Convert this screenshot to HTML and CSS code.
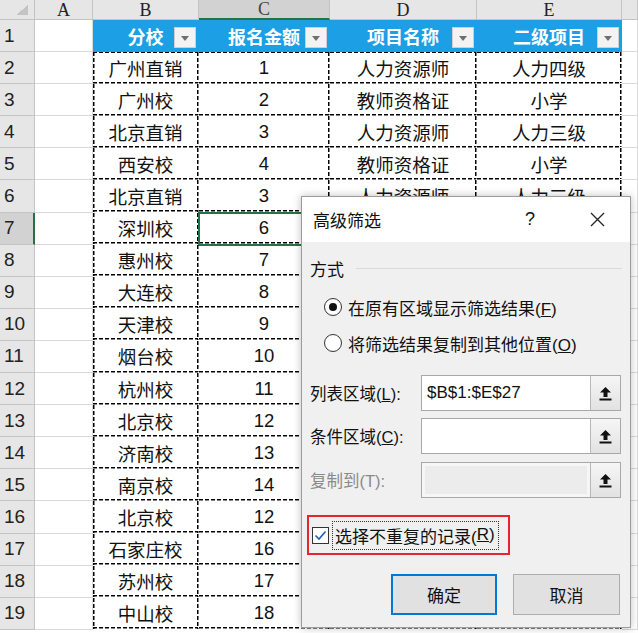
FILE: index.html
```html
<!DOCTYPE html>
<html lang="zh-CN">
<head>
    <meta charset="UTF-8">
    <title>高级筛选</title>
    <link rel="stylesheet" href="styles.css">
</head>
<body>
<div class="sheet" id="sheet"></div>

<div class="dlg">
    <div class="dlg-title">
        <span class="dlg-name">高级筛选</span>
        <span class="help">?</span>
        <svg class="close" width="15" height="15" viewBox="0 0 15 15">
            <path d="M1 1 L14 14 M14 1 L1 14" stroke="#222" stroke-width="1.3" fill="none"/>
        </svg>
    </div>
    <div class="dlg-body">
        <div class="group">
            <span>方式</span>
            <span class="group-line"></span>
        </div>
        <label class="radio-row first">
            <span class="radio on"></span>
            <span>在原有区域显示筛选结果(<u>F</u>)</span>
        </label>
        <label class="radio-row">
            <span class="radio"></span>
            <span>将筛选结果复制到其他位置(<u>O</u>)</span>
        </label>

        <div class="range first">
            <span class="range-label">列表区域(<u>L</u>):</span>
            <div class="field">
                <span class="val">$B$1:$E$27</span>
                <span class="pick"><svg width="13" height="15" viewBox="0 0 13 15"><path d="M6.5 1 L12 6.5 H8.5 V11 H4.5 V6.5 H1 Z" fill="#111"/><rect x="0.5" y="12.5" width="12" height="2" fill="#111"/></svg></span>
            </div>
        </div>
        <div class="range">
            <span class="range-label">条件区域(<u>C</u>):</span>
            <div class="field">
                <span class="val"></span>
                <span class="pick"><svg width="13" height="15" viewBox="0 0 13 15"><path d="M6.5 1 L12 6.5 H8.5 V11 H4.5 V6.5 H1 Z" fill="#111"/><rect x="0.5" y="12.5" width="12" height="2" fill="#111"/></svg></span>
            </div>
        </div>
        <div class="range third">
            <span class="range-label off">复制到(T):</span>
            <div class="field off">
                <span class="val"></span>
                <span class="pick"><svg width="13" height="15" viewBox="0 0 13 15"><path d="M6.5 1 L12 6.5 H8.5 V11 H4.5 V6.5 H1 Z" fill="#111"/><rect x="0.5" y="12.5" width="12" height="2" fill="#111"/></svg></span>
            </div>
        </div>

        <div class="mark">
            <span class="check">
                <svg width="17" height="17" viewBox="0 0 17 17">
                    <rect x="0.5" y="0.5" width="16" height="16" fill="#fff" stroke="#333"/>
                    <path d="M3.5 8.5 L7 12 L13.5 4.5" stroke="#1f5fb8" stroke-width="1.6" fill="none"/>
                </svg>
            </span>
            <span class="focus">选择不重复的记录(<u>R</u>)</span>
        </div>

        <div class="buttons">
            <button class="btn ok">确定</button>
            <button class="btn">取消</button>
        </div>
    </div>
</div>

<script>
    // F 列只露出一小截，不显示列标
    const cols = ['A', 'B', 'C', 'D', 'E', ''];
    const heads = ['分校', '报名金额', '项目名称', '二级项目'];
    // 第2行到第19行
    const rows = [
        ['广州直销', '1', '人力资源师', '人力四级'],
        ['广州校', '2', '教师资格证', '小学'],
        ['北京直销', '3', '人力资源师', '人力三级'],
        ['西安校', '4', '教师资格证', '小学'],
        ['北京直销', '3', '人力资源师', '人力三级'],
        ['深圳校', '6', '', ''],
        ['惠州校', '7', '', ''],
        ['大连校', '8', '', ''],
        ['天津校', '9', '', ''],
        ['烟台校', '10', '', ''],
        ['杭州校', '11', '', ''],
        ['北京校', '12', '', ''],
        ['济南校', '13', '', ''],
        ['南京校', '14', '', ''],
        ['北京校', '12', '', ''],
        ['石家庄校', '16', '', ''],
        ['苏州校', '17', '', ''],
        ['中山校', '18', '', '']
    ];

    let html = '<div class="corner"><i></i></div>';
    cols.forEach(c => {
        html += `<div class="ch${c === 'C' ? ' sel' : ''}">${c}</div>`;
    });

    for (let r = 1; r <= 19; r++) {
        html += `<div class="rh${r === 7 ? ' sel' : ''}">${r}</div><div class="cell"></div>`;
        if (r === 1) {
            heads.forEach(h => {
                html += `<div class="cell th">${h}<span class="fb"></span></div>`;
            });
        } else {
            rows[r - 2].forEach((v, i) => {
                let cls = 'cell t';
                if (i === 0) cls += ' l';
                if (r === 2) cls += ' tp';
                if (r === 7 && i === 1) cls += ' act';
                html += `<div class="${cls}">${v}</div>`;
            });
        }
        html += '<div class="cell"></div>';
    }

    document.getElementById('sheet').innerHTML = html;
</script>
</body>
</html>
```

FILE: styles.css
```css
body {
    margin: 0;
    background-color: #fff;
    font-family: "Liberation Sans", "Noto Sans CJK SC", sans-serif;
    color: #111;
    overflow: hidden;
}

/* 表格区域 */
.sheet {
    display: grid;
    grid-template-columns: 35px 58px 106px 131px 147px 145px 1fr;
    grid-template-rows: 20px repeat(19, 32.1px);
}

.sheet > div {
    box-sizing: border-box;
    display: flex;
    align-items: center;
    justify-content: center;
    border-right: 1px solid #d9d9d9;
    border-bottom: 1px solid #d9d9d9;
}

.corner {
    background-color: #e6e6e6;
    justify-content: flex-end !important;
    align-items: flex-start !important;
    padding: 5px 6px 0 0;
    border-color: #c2c2c2 !important;
}

.corner i {
    width: 12px;
    height: 10px;
    background: linear-gradient(to bottom right, transparent 50%, #c4c4c4 50%);
}

.ch {
    background-color: #e6e6e6;
    border-color: #c4c4c4 !important;
    font-family: "Liberation Serif", serif;
    font-size: 18px;
    color: #222;
    padding-top: 1px;
}

.ch.sel {
    background-color: #d2d2d2;
    border-bottom: 2px solid #217346 !important;
    color: #444;
}

.rh {
    background-color: #e6e6e6;
    border-color: #c4c4c4 !important;
    justify-content: flex-start !important;
    padding-left: 4px;
    font-size: 19px;
    color: #222;
}

.rh.sel {
    background-color: #d2d2d2;
    border-right: 2px solid #217346 !important;
}

.cell {
    font-size: 18.5px;
}

/* 表头 */
.th {
    position: relative;
    background-color: #1c9fe4;
    border-color: #1c9fe4 !important;
    color: #fff;
    font-weight: bold;
    font-size: 18px;
}

.fb {
    position: absolute;
    right: 2px;
    top: 7px;
    width: 22px;
    height: 21px;
    box-sizing: border-box;
    background-color: #f3f3f3;
    border: 1px solid #cfcfcf;
}

.fb::after {
    content: "";
    position: absolute;
    left: 6px;
    top: 8px;
    border-left: 4.5px solid transparent;
    border-right: 4.5px solid transparent;
    border-top: 5px solid #6f6f6f;
}

/* 复制区域的虚线框 */
.t {
    --dh: repeating-linear-gradient(90deg, #000 0 4px, transparent 4px 6px);
    --dv: repeating-linear-gradient(180deg, #000 0 4px, transparent 4px 6px);
    border-color: transparent !important;
    background-origin: border-box;
    background: var(--dh) left bottom / 100% 1.5px no-repeat,
                var(--dv) right top / 1.5px 100% no-repeat;
}

.t.l {
    background: var(--dh) left bottom / 100% 1.5px no-repeat,
                var(--dv) right top / 1.5px 100% no-repeat,
                var(--dv) left top / 1.5px 100% no-repeat;
}

.t.tp {
    background: var(--dh) left bottom / 100% 1.5px no-repeat,
                var(--dv) right top / 1.5px 100% no-repeat,
                var(--dh) left top / 100% 1.5px no-repeat;
}

.t.l.tp {
    background: var(--dh) left bottom / 100% 1.5px no-repeat,
                var(--dv) right top / 1.5px 100% no-repeat,
                var(--dv) left top / 1.5px 100% no-repeat,
                var(--dh) left top / 100% 1.5px no-repeat;
}

.act {
    outline: 2px solid #217346;
    outline-offset: -1px;
}

/* 高级筛选对话框 */
.dlg {
    position: absolute;
    left: 301px;
    top: 196px;
    width: 330px;
    height: 432px;
    box-sizing: border-box;
    border: 1px solid #9c9c9c;
    background-color: #f0f0f0;
    box-shadow: 0 0 8px rgba(0, 0, 0, 0.25);
    font-size: 17px;
    color: #111;
}

.dlg-title {
    height: 45px;
    background-color: #fff;
    display: flex;
    align-items: center;
    padding: 0 25px 0 11px;
}

.dlg-name {
    flex: 1;
}

.help {
    font-size: 18px;
    margin-right: 55px;
}

.dlg-body {
    padding: 0 8px;
}

.group {
    margin-top: 16px;
    height: 20px;
    display: flex;
    align-items: center;
}

.group-line {
    flex: 1;
    height: 1px;
    margin-left: 12px;
    background-color: #dadada;
}

.radio-row {
    display: flex;
    align-items: center;
    height: 22px;
    margin-top: 14px;
    margin-left: 14px;
}

.radio-row.first {
    margin-top: 18px;
}

.radio {
    width: 18px;
    height: 18px;
    box-sizing: border-box;
    border: 1px solid #333;
    border-radius: 50%;
    background-color: #fff;
    margin-right: 6px;
    display: flex;
    align-items: center;
    justify-content: center;
}

.radio.on::after {
    content: "";
    width: 8px;
    height: 8px;
    border-radius: 50%;
    background-color: #111;
}

.range {
    display: flex;
    align-items: center;
    margin-top: 7px;
}

.range.first {
    margin-top: 21px;
}

.range.third {
    margin-top: 8px;
}

.range-label {
    width: 111px;
    font-size: 16.5px;
}

.range-label.off {
    color: #8a8a8a;
}

.field {
    width: 200px;
    height: 36px;
    box-sizing: border-box;
    border: 1px solid #a8a8a8;
    display: flex;
}

.val {
    flex: 1;
    background-color: #fff;
    padding-left: 5px;
    display: flex;
    align-items: center;
    font-size: 17px;
}

.field.off .val {
    background-color: #ececec;
    border: 3px solid #f6f6f6;
}

.pick {
    width: 29px;
    border-left: 1px solid #b8b8b8;
    background: linear-gradient(#f6f6f6, #e2e2e2);
    display: flex;
    align-items: center;
    justify-content: center;
}

.mark {
    margin-top: 17px;
    margin-left: -3px;
    width: 203px;
    height: 40px;
    box-sizing: border-box;
    border: 2px solid #e0262f;
    display: flex;
    align-items: center;
}

.check {
    margin-left: 3px;
    width: 17px;
    height: 17px;
    display: flex;
}

.focus {
    margin-left: 3px;
    height: 29px;
    box-sizing: border-box;
    border: 1px dotted #333;
    padding: 0 3px 0 2px;
    display: flex;
    align-items: center;
}

.buttons {
    margin-top: 19px;
    margin-right: 2px;
    display: flex;
    justify-content: flex-end;
    gap: 16px;
}

.btn {
    width: 107px;
    height: 41px;
    box-sizing: border-box;
    background-color: #e1e1e1;
    border: 1px solid #adadad;
    font-family: "Liberation Sans", "Noto Sans CJK SC", sans-serif;
    font-size: 17px;
    color: #111;
    padding: 0;
}

.btn.ok {
    width: 106px;
    border: 2px solid #0078d7;
}
```
